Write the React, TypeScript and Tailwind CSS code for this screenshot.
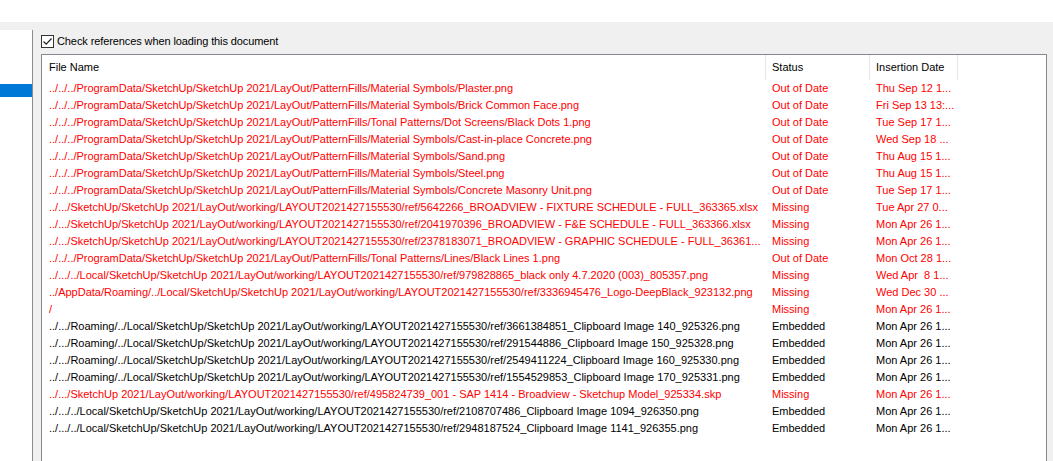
const RED = "text-[#ff0000]";

type Row = { name: string; status: string; date: string; ok?: boolean };

const PF = "../../../ProgramData/SketchUp/SketchUp 2021/LayOut/PatternFills/";
const REF = "SketchUp/SketchUp 2021/LayOut/working/LAYOUT2021427155530/ref/";

const rows: Row[] = [
  { name: PF + "Material Symbols/Plaster.png", status: "Out of Date", date: "Thu Sep 12 1..." },
  { name: PF + "Material Symbols/Brick Common Face.png", status: "Out of Date", date: "Fri Sep 13 13:..." },
  { name: PF + "Tonal Patterns/Dot Screens/Black Dots 1.png", status: "Out of Date", date: "Tue Sep 17 1..." },
  { name: PF + "Material Symbols/Cast-in-place Concrete.png", status: "Out of Date", date: "Wed Sep 18 ..." },
  { name: PF + "Material Symbols/Sand.png", status: "Out of Date", date: "Thu Aug 15 1..." },
  { name: PF + "Material Symbols/Steel.png", status: "Out of Date", date: "Thu Aug 15 1..." },
  { name: PF + "Material Symbols/Concrete Masonry Unit.png", status: "Out of Date", date: "Tue Sep 17 1..." },
  { name: "../.../" + REF + "5642266_BROADVIEW - FIXTURE SCHEDULE - FULL_363365.xlsx", status: "Missing", date: "Tue Apr 27 0..." },
  { name: "../.../" + REF + "2041970396_BROADVIEW - F&E SCHEDULE - FULL_363366.xlsx", status: "Missing", date: "Mon Apr 26 1..." },
  { name: "../.../" + REF + "2378183071_BROADVIEW - GRAPHIC SCHEDULE - FULL_36361...", status: "Missing", date: "Mon Apr 26 1..." },
  { name: PF + "Tonal Patterns/Lines/Black Lines 1.png", status: "Out of Date", date: "Mon Oct 28 1..." },
  { name: "../.../../Local/" + REF + "979828865_black only 4.7.2020 (003)_805357.png", status: "Missing", date: "Wed Apr  8 1..." },
  { name: "../AppData/Roaming/../Local/" + REF + "3336945476_Logo-DeepBlack_923132.png", status: "Missing", date: "Wed Dec 30 ..." },
  { name: "/", status: "Missing", date: "Mon Apr 26 1..." },
  { name: "../.../Roaming/../Local/" + REF + "3661384851_Clipboard Image 140_925326.png", status: "Embedded", date: "Mon Apr 26 1...", ok: true },
  { name: "../.../Roaming/../Local/" + REF + "291544886_Clipboard Image 150_925328.png", status: "Embedded", date: "Mon Apr 26 1...", ok: true },
  { name: "../.../Roaming/../Local/" + REF + "2549411224_Clipboard Image 160_925330.png", status: "Embedded", date: "Mon Apr 26 1...", ok: true },
  { name: "../.../Roaming/../Local/" + REF + "1554529853_Clipboard Image 170_925331.png", status: "Embedded", date: "Mon Apr 26 1...", ok: true },
  { name: "../.../SketchUp 2021/LayOut/working/LAYOUT2021427155530/ref/495824739_001 - SAP 1414 - Broadview - Sketchup Model_925334.skp", status: "Missing", date: "Mon Apr 26 1..." },
  { name: "../.../../Local/" + REF + "2108707486_Clipboard Image 1094_926350.png", status: "Embedded", date: "Mon Apr 26 1...", ok: true },
  { name: "../.../../Local/" + REF + "2948187524_Clipboard Image 1141_926355.png", status: "Embedded", date: "Mon Apr 26 1...", ok: true },
];

function CheckBox() {
  return (
    <div className="w-[13px] h-[13px] shrink-0 border border-[#333333] bg-white flex items-center justify-center">
      <svg width="11" height="11" viewBox="0 0 11 11">
        <path d="M1.5 5.5 L4.2 8.2 L9.5 2.5" fill="none" stroke="#222" strokeWidth="1.2" />
      </svg>
    </div>
  );
}

export default function App() {
  return (
    <div
      className="w-[1053px] h-[461px] overflow-hidden bg-white flex flex-col text-[11px] text-black"
      style={{ fontFamily: '"Liberation Sans", Arial, sans-serif' }}
    >
      <div className="h-[22px] shrink-0 bg-white" />
      <div className="flex-1 flex bg-[#f0f0f0] min-h-0">
        {/* left tree pane */}
        <div className="w-[33px] shrink-0 pt-[8px] flex flex-col">
          <div className="flex-1 bg-white border-r border-[#8c8c8c] pt-[54px]">
            <div className="h-[13px] bg-[#0078d7]" />
          </div>
        </div>

        <div className="flex-1 flex flex-col pl-[8px] pr-[6px] min-w-0">
          <div className="h-[32px] shrink-0 flex items-center gap-[3px] pt-[8px] pb-[2px]">
            <CheckBox />
            <span className="tracking-[-0.1px]">Check references when loading this document</span>
          </div>

          <div className="flex-1 bg-white border-t border-l border-r border-[#828790] min-h-0 overflow-hidden">
            <div className="flex h-[25px] items-center">
              <div className="w-[724px] shrink-0 pl-[7px] h-full flex items-center border-r border-[#e5e5e5]">File Name</div>
              <div className="w-[104px] shrink-0 pl-[6px] h-full flex items-center border-r border-[#e5e5e5]">Status</div>
              <div className="w-[88px] shrink-0 pl-[6px] h-full flex items-center border-r border-[#e5e5e5]">Insertion Date</div>
            </div>
            {rows.map((r, i) => (
              <div key={i} className={`flex h-[17px] items-center whitespace-nowrap ${r.ok ? "text-black" : RED}`}>
                <div className="w-[724px] shrink-0 pl-[7px] overflow-hidden">{r.name}</div>
                <div className="w-[104px] shrink-0 pl-[6px] overflow-hidden">{r.status}</div>
                <div className="w-[88px] shrink-0 pl-[6px] overflow-hidden whitespace-pre">{r.date}</div>
              </div>
            ))}
          </div>
        </div>
      </div>
    </div>
  );
}
